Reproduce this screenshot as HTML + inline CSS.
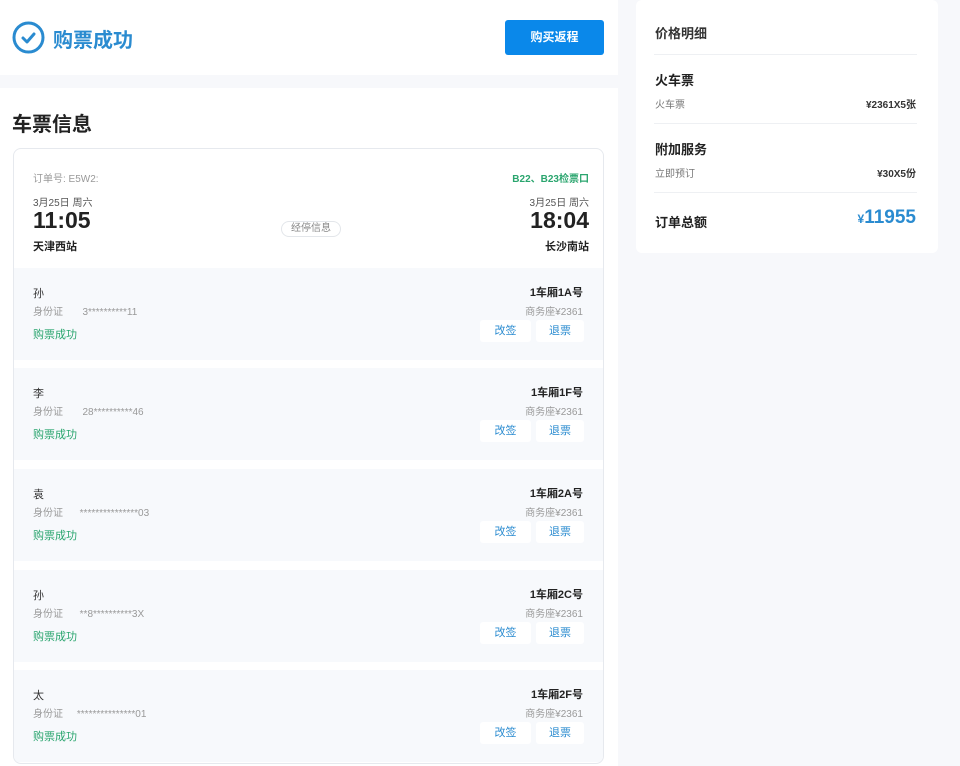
<html><head><style>
body{margin:0;width:960px;height:766px;background:#f7f8fb;font-family:"Liberation Sans","Noto Sans CJK SC",sans-serif;position:relative;overflow:hidden}
.a{position:absolute}
.hd{left:0;top:0;width:618px;height:75px;background:#fff}
.mn{left:0;top:88px;width:618px;height:678px;background:#fff}
.card{left:13px;top:148px;width:589px;height:614px;border:1px solid #e6e9ee;border-radius:8px;background:#fff;overflow:hidden}
.row{position:absolute;left:0;width:589px;height:92px;background:#f7f9fc}
.s{font-size:10px;color:#999}
.btn{position:absolute;top:52px;height:22px;line-height:22px;background:#fff;color:#2a8bd0;font-size:11px;text-align:center;border-radius:3px}
.rp{left:636px;top:0;width:302px;height:253px;background:#fff;border-radius:6px}
.ln{position:absolute;left:18px;width:263px;height:1px;background:#eef0f3}
</style></head><body>
<div class="a hd">
<svg class="a" style="left:12px;top:21px" width="33" height="33" viewBox="0 0 33 33"><circle cx="16.5" cy="16.5" r="14.5" fill="none" stroke="#2a8bd0" stroke-width="3"/><path d="M11 17l4 4 7-8" fill="none" stroke="#2a8bd0" stroke-width="3" stroke-linecap="round" stroke-linejoin="round"/></svg>
<div class="a" style="left:53px;top:24px;font-size:20px;font-weight:bold;color:#2a8bd0">购票成功</div>
<div class="a" style="left:505px;top:20px;width:99px;height:35px;background:#0a88ea;border-radius:3px;color:#fff;font-size:12px;font-weight:bold;text-align:center;line-height:35px">购买返程</div>
</div>
<div class="a mn"><div class="a" style="left:12px;top:20px;font-size:20px;font-weight:bold;color:#222">车票信息</div></div>
<div class="a card">
<div class="a s" style="left:19px;top:21px">订单号: E5W2:</div>
<div class="a" style="right:14px;top:21px;font-size:10px;font-weight:bold;color:#2aa56e">B22、B23检票口</div>
<div class="a s" style="left:19px;top:45px;color:#555">3月25日 周六</div>
<div class="a s" style="right:14px;top:45px;color:#555">3月25日 周六</div>
<div class="a" style="left:19px;top:58px;font-size:23px;font-weight:bold;color:#222">11:05</div>
<div class="a" style="right:14px;top:58px;font-size:23px;font-weight:bold;color:#222">18:04</div>
<div class="a" style="left:19px;top:89px;font-size:11px;font-weight:bold;color:#222">天津西站</div>
<div class="a" style="right:14px;top:89px;font-size:11px;font-weight:bold;color:#222">长沙南站</div>
<div class="a" style="left:267px;top:72px;width:58px;height:14px;border:1px solid #e3e6ea;border-radius:8px;font-size:10px;color:#888;text-align:center;line-height:14px">经停信息</div>
<div class="row" style="top:119px"><div class="a" style="left:19px;top:17px;font-size:11px;color:#333">孙</div><div class="a s" style="left:19px;top:35px">身份证 &nbsp;&nbsp;&nbsp;&nbsp;&nbsp;&nbsp;3**********11</div><div class="a" style="left:19px;top:58px;font-size:11px;color:#2aa56e">购票成功</div><div class="a" style="right:20px;top:16px;font-size:11px;font-weight:bold;color:#222">1车厢1A号</div><div class="a s" style="right:20px;top:35px">商务座¥2361</div><div class="btn" style="left:466px;width:51px">改签</div><div class="btn" style="left:522px;width:48px">退票</div></div>
<div class="row" style="top:219px"><div class="a" style="left:19px;top:17px;font-size:11px;color:#333">李</div><div class="a s" style="left:19px;top:35px">身份证 &nbsp;&nbsp;&nbsp;&nbsp;&nbsp;&nbsp;28**********46</div><div class="a" style="left:19px;top:58px;font-size:11px;color:#2aa56e">购票成功</div><div class="a" style="right:20px;top:16px;font-size:11px;font-weight:bold;color:#222">1车厢1F号</div><div class="a s" style="right:20px;top:35px">商务座¥2361</div><div class="btn" style="left:466px;width:51px">改签</div><div class="btn" style="left:522px;width:48px">退票</div></div>
<div class="row" style="top:320px"><div class="a" style="left:19px;top:17px;font-size:11px;color:#333">袁</div><div class="a s" style="left:19px;top:35px">身份证 &nbsp;&nbsp;&nbsp;&nbsp;&nbsp;***************03</div><div class="a" style="left:19px;top:58px;font-size:11px;color:#2aa56e">购票成功</div><div class="a" style="right:20px;top:16px;font-size:11px;font-weight:bold;color:#222">1车厢2A号</div><div class="a s" style="right:20px;top:35px">商务座¥2361</div><div class="btn" style="left:466px;width:51px">改签</div><div class="btn" style="left:522px;width:48px">退票</div></div>
<div class="row" style="top:421px"><div class="a" style="left:19px;top:17px;font-size:11px;color:#333">孙</div><div class="a s" style="left:19px;top:35px">身份证 &nbsp;&nbsp;&nbsp;&nbsp;&nbsp;**8**********3X</div><div class="a" style="left:19px;top:58px;font-size:11px;color:#2aa56e">购票成功</div><div class="a" style="right:20px;top:16px;font-size:11px;font-weight:bold;color:#222">1车厢2C号</div><div class="a s" style="right:20px;top:35px">商务座¥2361</div><div class="btn" style="left:466px;width:51px">改签</div><div class="btn" style="left:522px;width:48px">退票</div></div>
<div class="row" style="top:521px"><div class="a" style="left:19px;top:17px;font-size:11px;color:#333">太</div><div class="a s" style="left:19px;top:35px">身份证 &nbsp;&nbsp;&nbsp;&nbsp;***************01</div><div class="a" style="left:19px;top:58px;font-size:11px;color:#2aa56e">购票成功</div><div class="a" style="right:20px;top:16px;font-size:11px;font-weight:bold;color:#222">1车厢2F号</div><div class="a s" style="right:20px;top:35px">商务座¥2361</div><div class="btn" style="left:466px;width:51px">改签</div><div class="btn" style="left:522px;width:48px">退票</div></div>
</div>
<div class="a rp">
<div class="a" style="left:19px;top:23px;font-size:13px;font-weight:bold;color:#333">价格明细</div>
<div class="ln" style="top:54px"></div>
<div class="a" style="left:19px;top:70px;font-size:13px;font-weight:bold;color:#222">火车票</div>
<div class="a" style="left:19px;top:96px;font-size:10px;color:#777">火车票</div>
<div class="a" style="right:22px;top:96px;font-size:10px;font-weight:bold;color:#333">¥2361X5张</div>
<div class="ln" style="top:123px"></div>
<div class="a" style="left:19px;top:139px;font-size:13px;font-weight:bold;color:#222">附加服务</div>
<div class="a" style="left:19px;top:165px;font-size:10px;color:#777">立即预订</div>
<div class="a" style="right:22px;top:165px;font-size:10px;font-weight:bold;color:#333">¥30X5份</div>
<div class="ln" style="top:192px"></div>
<div class="a" style="left:19px;top:212px;font-size:13px;font-weight:bold;color:#222">订单总额</div>
<div class="a" style="right:22px;top:207px;font-size:19px;font-weight:bold;color:#2a8bd0"><span style="font-size:12px">¥</span>11955</div>
</div>
</body></html>
